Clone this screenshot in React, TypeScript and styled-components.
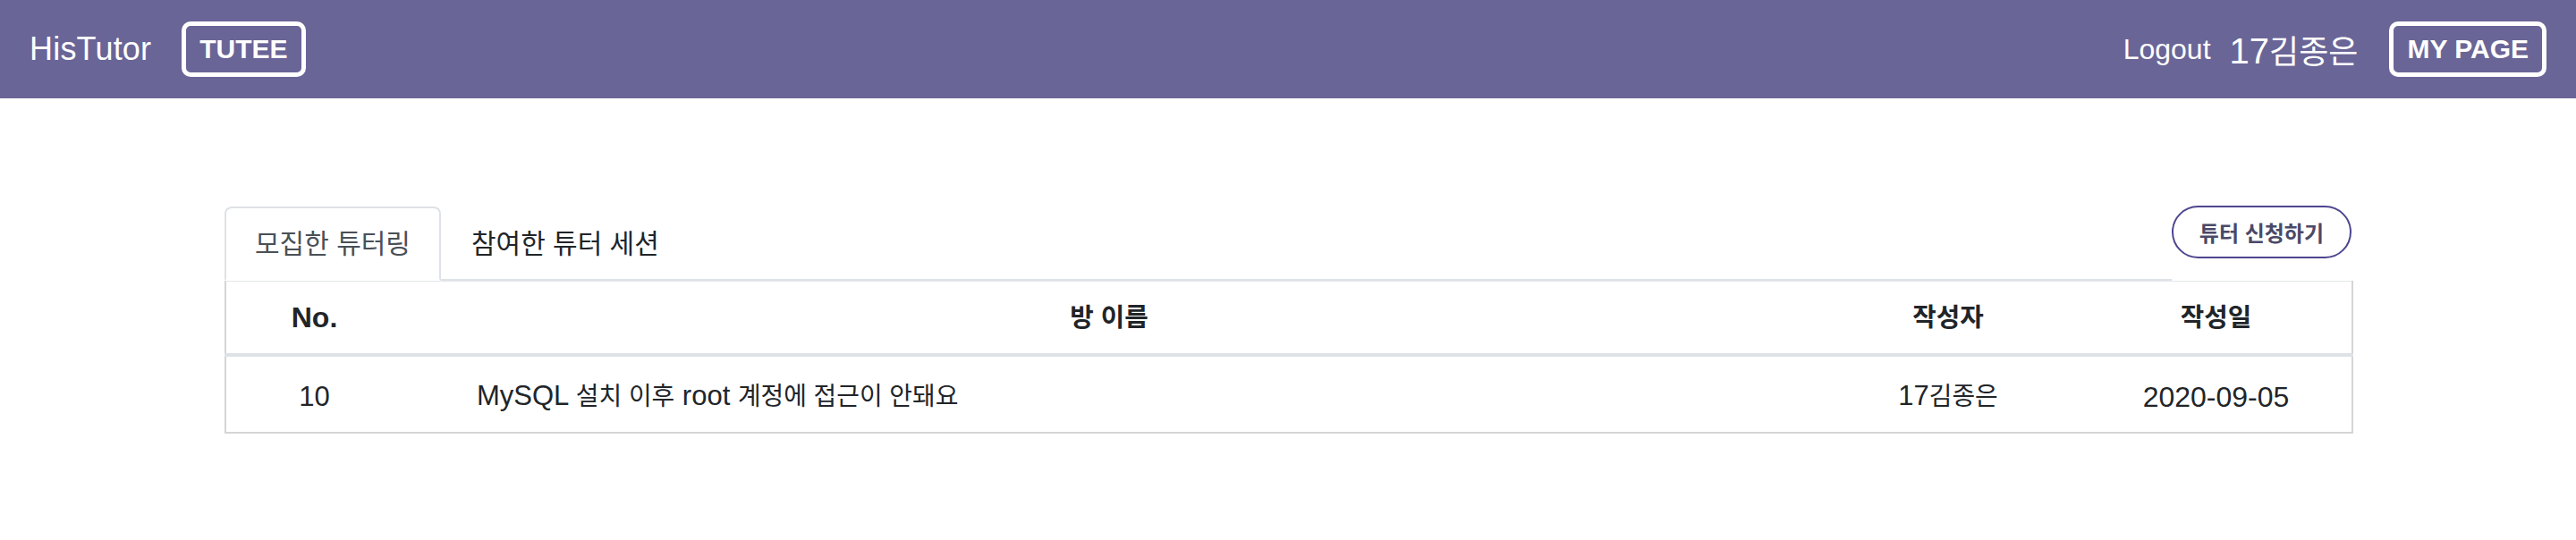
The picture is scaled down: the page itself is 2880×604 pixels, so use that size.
import React from "react";
import styled, { createGlobalStyle, css } from "styled-components";

const GlobalStyle = createGlobalStyle`
  html, body {
    margin: 0;
    padding: 0;
    background: #ffffff;
  }
  body {
    font-family: "Liberation Sans", "Noto Sans CJK KR", Arial, sans-serif;
    color: #212529;
  }
  * { box-sizing: border-box; }
`;

/* Hangul is set a little smaller so its width matches the reference font */
const Ko = styled.span`
  font-size: 0.9em;
`;

const NavBar = styled.header`
  height: 110px;
  background: #6a6597;
  color: #ffffff;
  display: flex;
  align-items: center;
  justify-content: space-between;
  padding: 0 33px;
`;

const Brand = styled.div`
  display: flex;
  align-items: center;
  gap: 34px;
`;

const Logo = styled.span`
  font-size: 36px;
  letter-spacing: 0.2px;
`;

const OutlineBox = styled.span`
  display: inline-flex;
  align-items: center;
  height: 62px;
  border: 5px solid #ffffff;
  border-radius: 10px;
  padding: 0 15px;
  font-size: 30px;
  font-weight: 700;
  color: #ffffff;
`;

const UserArea = styled.div`
  display: flex;
  align-items: center;
`;

const Logout = styled.span`
  font-size: 32px;
  margin-right: 21px;
`;

const UserName = styled.span`
  font-size: 40px;
  margin-right: 35px;
`;

const Main = styled.main`
  width: 2378px;
  margin: 121px auto 0;
`;

const TabRow = styled.div`
  display: flex;
  align-items: flex-start;
`;

const Tabs = styled.ul`
  list-style: none;
  margin: 0;
  padding: 0;
  flex: 1;
  display: flex;
  border-bottom: 2px solid #dee2e6;
`;

const Tab = styled.li<{ $active?: boolean }>`
  margin-bottom: -2px;
  padding: 16px 32px 15px;
  line-height: 48px;
  font-size: 30px;
  color: #212529;
  border: 2px solid transparent;
  border-radius: 8px 8px 0 0;
  ${(p) =>
    p.$active &&
    css`
      border-color: #dee2e6 #dee2e6 #ffffff;
      background: #ffffff;
      color: #495057;
    `}
`;

const ApplyButton = styled.button`
  margin-top: -1px;
  height: 59px;
  padding: 0 29px;
  border: 2px solid #4c468f;
  border-radius: 30px;
  background: #ffffff;
  color: #4a4968;
  font-family: inherit;
  font-size: 24px;
  font-weight: 700;
`;

const Table = styled.table`
  width: 100%;
  border-collapse: collapse;
  table-layout: fixed;
  border: 2px solid #d5d5d7;
  border-top: 1px solid #e4e6e9;
`;

const Col = styled.col<{ $w: number }>`
  width: ${(p) => p.$w}px;
`;

const HeadCell = styled.th`
  font-size: 32px;
  font-weight: 700;
  line-height: 48px;
  padding: 15px 0 16px;
  text-align: center;
  color: #212529;
  border-bottom: 4px solid #dee2e6;
`;

const Cell = styled.td<{ $left?: boolean; $size?: number }>`
  font-size: ${(p) => p.$size ?? 31}px;
  line-height: 48px;
  padding: 20px 0 15px;
  text-align: ${(p) => (p.$left ? "left" : "center")};
  padding-left: ${(p) => (p.$left ? "83px" : "0")};
  color: #212529;
`;

export default function App() {
  return (
    <>
      <GlobalStyle />
      <NavBar>
        <Brand>
          <Logo>HisTutor</Logo>
          <OutlineBox>TUTEE</OutlineBox>
        </Brand>
        <UserArea>
          <Logout>Logout</Logout>
          <UserName>
            17<Ko>김종은</Ko>
          </UserName>
          <OutlineBox>MY PAGE</OutlineBox>
        </UserArea>
      </NavBar>
      <Main>
        <TabRow>
          <Tabs>
            <Tab $active>모집한 튜터링</Tab>
            <Tab>참여한 튜터 세션</Tab>
          </Tabs>
          <ApplyButton>튜터 신청하기</ApplyButton>
        </TabRow>
        <Table>
          <colgroup>
            <Col $w={198} />
            <Col $w={1580} />
            <Col $w={296} />
            <Col $w={304} />
          </colgroup>
          <thead>
            <tr>
              <HeadCell>No.</HeadCell>
              <HeadCell>
                <Ko>방 이름</Ko>
              </HeadCell>
              <HeadCell>
                <Ko>작성자</Ko>
              </HeadCell>
              <HeadCell>
                <Ko>작성일</Ko>
              </HeadCell>
            </tr>
          </thead>
          <tbody>
            <tr>
              <Cell>10</Cell>
              <Cell $left>
                MySQL <Ko>설치 이후</Ko> root <Ko>계정에 접근이 안돼요</Ko>
              </Cell>
              <Cell>
                17<Ko>김종은</Ko>
              </Cell>
              <Cell $size={32}>2020-09-05</Cell>
            </tr>
          </tbody>
        </Table>
      </Main>
    </>
  );
}
